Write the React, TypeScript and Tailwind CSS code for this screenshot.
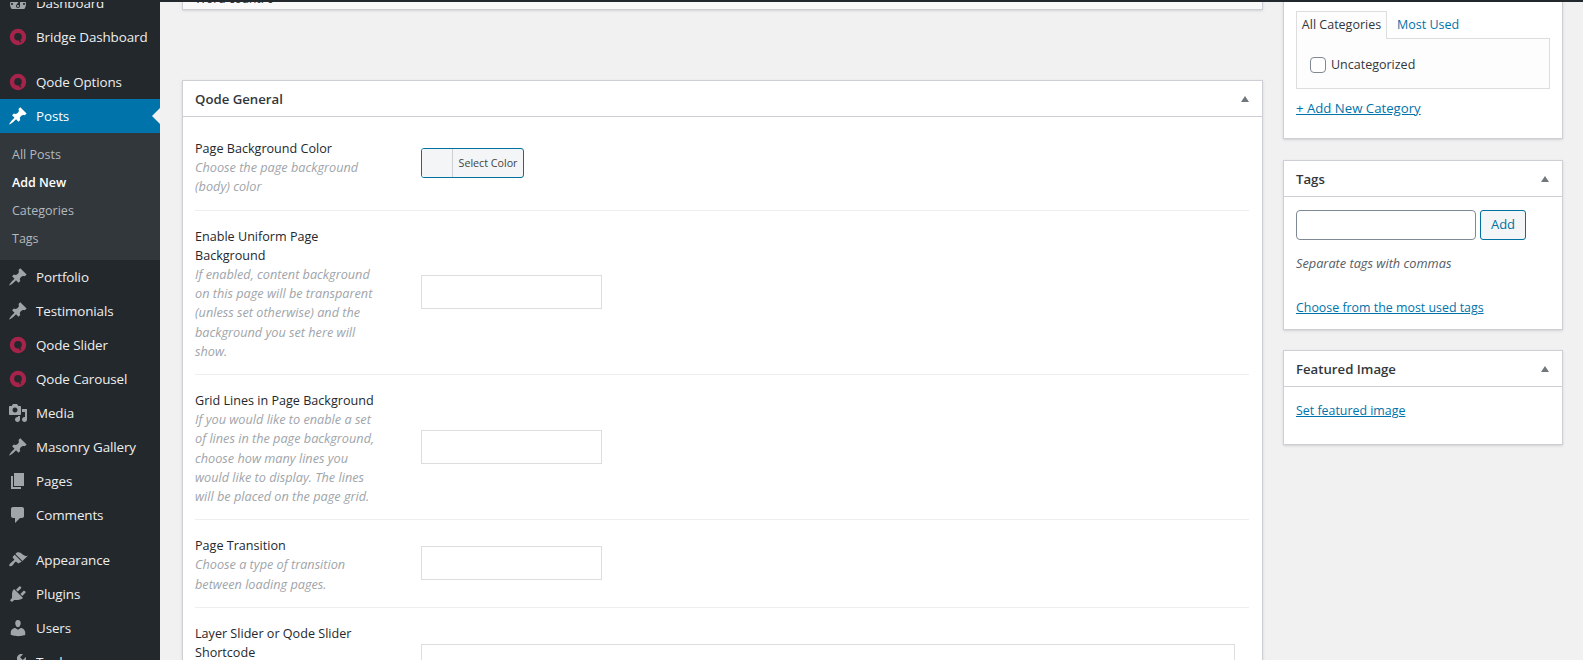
import React from 'react';

const font = { fontFamily: '"Open Sans", "Noto Sans", sans-serif' };

const paths: Record<string, string> = {
  dashboard: 'M3.76 16h12.48c1.1-1.37 1.76-3.11 1.76-5 0-4.42-3.58-8-8-8s-8 3.58-8 8c0 1.89.66 3.63 1.76 5zM10 4c.55 0 1 .45 1 1s-.45 1-1 1-1-.45-1-1 .45-1 1-1zM6 6c.55 0 1 .45 1 1s-.45 1-1 1-1-.45-1-1 .45-1 1-1zm8 0c.55 0 1 .45 1 1s-.45 1-1 1-1-.45-1-1 .45-1 1-1zm-5.37 5.55L12 7v6c0 1.1-.9 2-2 2s-2-.9-2-2c0-.57.24-1.08.63-1.45zM4 10c.55 0 1 .45 1 1s-.45 1-1 1-1-.45-1-1 .45-1 1-1zm12 0c.55 0 1 .45 1 1s-.45 1-1 1-1-.45-1-1 .45-1 1-1zm-5 3c0-.55-.45-1-1-1s-1 .45-1 1 .45 1 1 1 1-.45 1-1z',
  pin: 'M10.44 3.02l1.82-1.82 6.36 6.35-1.83 1.82c-1.05-.68-2.48-.57-3.41.36l-.75.75c-.92.93-1.04 2.35-.35 3.41l-1.83 1.82-2.41-2.41-2.8 2.79c-.42.42-3.38 2.71-3.8 2.29s1.86-3.39 2.28-3.81l2.79-2.79L4.1 9.36l1.83-1.82c1.05.69 2.48.57 3.4-.36l.75-.75c.93-.92 1.05-2.35.36-3.41z',
  media: 'M13 11V4c0-.55-.45-1-1-1h-1.67L9 1H5L3.67 3H2c-.55 0-1 .45-1 1v7c0 .55.45 1 1 1h10c.55 0 1-.45 1-1zM7 4.5c1.38 0 2.5 1.12 2.5 2.5S8.38 9.5 7 9.5 4.5 8.38 4.5 7 5.62 4.5 7 4.5zM14 6h5v10.5c0 1.38-1.12 2.5-2.5 2.5S14 17.88 14 16.5s1.12-2.5 2.5-2.5c.17 0 .34.02.5.05V9h-3V6zm-4 8.05V13h2v3.5c0 1.38-1.12 2.5-2.5 2.5S7 17.88 7 16.5 8.12 14 9.5 14c.17 0 .34.02.5.05z',
  pages: 'M6 15V2h10v13H6zm-1 1h8v2H3V5h2v11z',
  comments: 'M5 2h9c1.1 0 2 .9 2 2v7c0 1.1-.9 2-2 2h-2l-5 5v-5H5c-1.1 0-2-.9-2-2V4c0-1.1.9-2 2-2z',
  appearance: 'M14.48 11.06L7.41 3.99l1.5-1.5c.5-.56 2.3-.47 3.51.32 1.21.8 1.43 1.28 2.91 2.1 1.18.64 2.45 1.26 4.45.85zm-.71.71L6.7 4.7 4.93 6.47c-.39.39-.39 1.02 0 1.41l1.06 1.06c.39.39.39 1.03 0 1.42-.6.6-1.43 1.11-2.21 1.69-.35.26-.7.53-1.01.84C1.43 13.71.96 15.12 1.5 15.9c.56.84 2.07.41 3.12-.64.31-.31.58-.66.84-1.01.58-.78 1.09-1.61 1.69-2.21.39-.39 1.03-.39 1.42 0l1.06 1.06c.39.39 1.02.39 1.41 0z',
  plugins: 'M13.11 4.36L9.87 7.6 8 5.73l3.24-3.24c.35-.34 1.05-.2 1.56.32.52.51.66 1.21.31 1.55zm-8 1.77l.91-1.12 9.01 9.01-1.19.84c-.71.71-2.63 1.16-3.82 1.16H6.14L4.9 17.26c-.59.59-1.54.59-2.12 0-.59-.58-.59-1.53 0-2.12l1.24-1.24v-3.88c0-1.13.4-3.19 1.09-3.89zm7.26 3.97l3.24-3.24c.34-.35 1.04-.21 1.55.31.52.51.66 1.21.31 1.55l-3.24 3.25z',
  users: 'M10 9.25c-2.27 0-2.73-3.44-2.73-3.44C7 4.02 7.82 2 9.97 2c2.16 0 2.98 2.02 2.71 3.81 0 0-.41 3.44-2.68 3.44zm0 2.57L12.72 10c2.39 0 4.52 2.33 4.52 4.53v2.49s-3.65 1.13-7.24 1.13c-3.65 0-7.24-1.13-7.24-1.13v-2.49c0-2.25 1.94-4.48 4.47-4.48z',
  tools: 'M16.68 9.77c-1.34 1.34-3.3 1.67-4.95.99l-5.41 6.52c-.99.99-2.59.99-3.58 0s-.99-2.59 0-3.57l6.52-5.42c-.68-1.65-.35-3.61.99-4.95 1.28-1.28 3.12-1.62 4.72-1.06l-2.89 2.89 2.82 2.82 2.86-2.87c.53 1.58.18 3.39-1.08 4.65zM3.81 16.21c.4.39 1.04.39 1.43 0 .4-.4.4-1.04 0-1.43-.39-.4-1.03-.4-1.43 0-.39.39-.39 1.03 0 1.43z',
};

function MenuIcon({ name, white }: { name: string; white?: boolean }) {
  if (name === 'qode') {
    return (
      <svg viewBox="0 0 20 20" className="w-5 h-5 shrink-0">
        <circle cx="10" cy="10" r="8.2" fill="#a6234a" />
        <circle cx="10" cy="9.8" r="3.8" fill="#23282d" />
        <path d="M11.6 11.5l1.6 3.6-1.3.5-1.3-3.6z" fill="#23282d" />
      </svg>
    );
  }
  return (
    <svg viewBox="0 0 20 20" className={white ? 'w-5 h-5 shrink-0 fill-white' : 'w-5 h-5 shrink-0 fill-[#a0a5aa]'}>
      <path d={paths[name]} />
    </svg>
  );
}

function MenuItem({ icon, label }: { icon: string; label: string }) {
  return (
    <div className="h-[34px] flex items-center pl-2 gap-2 text-[13.4px] tracking-[-0.1px] text-[#eeeeee]">
      <MenuIcon name={icon} />
      <span>{label}</span>
    </div>
  );
}

function Sidebar() {
  return (
    <div className="w-[160px] shrink-0 h-full bg-[#23282d] overflow-hidden">
      <div className="-mt-[14px]">
        <MenuItem icon="dashboard" label="Dashboard" />
        <MenuItem icon="qode" label="Bridge Dashboard" />
        <div className="h-[11px]" />
        <MenuItem icon="qode" label="Qode Options" />
        <div className="relative h-[34px] flex items-center pl-2 gap-2 text-[13.4px] tracking-[-0.1px] text-white bg-[#0073aa]">
          <MenuIcon name="pin" white />
          <span>Posts</span>
          <div className="absolute right-0 top-[9px] border-y-[8px] border-y-transparent border-r-[8px] border-r-[#f1f1f1]" />
        </div>
        <div className="bg-[#32373c] pt-[8px] pb-[7px] text-[12.5px] text-[#b4b9be]">
          <div className="h-[28px] flex items-center pl-3">All Posts</div>
          <div className="h-[28px] flex items-center pl-3 text-white font-semibold">Add New</div>
          <div className="h-[28px] flex items-center pl-3">Categories</div>
          <div className="h-[28px] flex items-center pl-3">Tags</div>
        </div>
        <MenuItem icon="pin" label="Portfolio" />
        <MenuItem icon="pin" label="Testimonials" />
        <MenuItem icon="qode" label="Qode Slider" />
        <MenuItem icon="qode" label="Qode Carousel" />
        <MenuItem icon="media" label="Media" />
        <MenuItem icon="pin" label="Masonry Gallery" />
        <MenuItem icon="pages" label="Pages" />
        <MenuItem icon="comments" label="Comments" />
        <div className="h-[11px]" />
        <MenuItem icon="appearance" label="Appearance" />
        <MenuItem icon="plugins" label="Plugins" />
        <MenuItem icon="users" label="Users" />
        <MenuItem icon="tools" label="Tools" />
      </div>
    </div>
  );
}

function Caret() {
  return <div className="w-0 h-0 border-x-[4px] border-x-transparent border-b-[6px] border-b-[#72777c]" />;
}

function PanelHeader({ title }: { title: string }) {
  return (
    <div className="h-[36px] flex items-center justify-between border-b border-[#ccd0d4] pl-3 pr-[13px] text-[13.2px] font-semibold text-[#32373c]">
      <span className="mt-[2px]">{title}</span>
      <Caret />
    </div>
  );
}

function Row({ title, desc, first, children }: { title: string[]; desc: string[]; first?: boolean; children: React.ReactNode }) {
  return (
    <div className={first ? 'flex items-center pt-[1px] pb-[13px] border-b border-[#eeeeee]' : 'flex items-center pt-[16px] pb-[13px] border-b border-[#eeeeee]'}>
      <div className="w-[226px] shrink-0 leading-[19.2px]">
        {title.map(t => <div key={t} className="text-[12.6px] text-[#23282d]">{t}</div>)}
        {desc.map(t => <div key={t} className="text-[12.7px] italic text-[#a0a5aa]">{t}</div>)}
      </div>
      {children}
    </div>
  );
}

function EmptyBox() {
  return <div className="w-[181px] h-[34px] mb-1 border border-[#dddddd] bg-white" />;
}

function MainColumn() {
  return (
    <div className="w-[1081px] ml-[22px] shrink-0">
      <div className="h-[10px] -mt-[2px] bg-[#f9f9f9] border border-[#ccd0d4] border-t-0 shadow-sm overflow-hidden text-[12px] leading-[8px] text-[#32373c] pl-3 flex items-start">
        <span className="-mt-[5px]">Word count: 0</span>
      </div>
      <div className="mt-[70px] bg-white border border-[#ccd0d4] shadow-sm">
        <PanelHeader title="Qode General" />
        <div className="pl-3 pr-[13px] pt-[21px]">
          <Row first title={['Page Background Color']} desc={['Choose the page background', '(body) color']}>
            <div className="mb-[10px] w-[103px] h-[30px] flex border border-[#0071a1] rounded-[3px] bg-[#f3f5f6] overflow-hidden">
              <div className="w-[31px] border-r border-[#ccd0d4] bg-[#f3f5f6]" />
              <div className="flex-1 flex items-center justify-center text-[10.7px] text-[#444444]">Select Color</div>
            </div>
          </Row>
          <Row
            title={['Enable Uniform Page', 'Background']}
            desc={['If enabled, content background', 'on this page will be transparent', '(unless set otherwise) and the', 'background you set here will', 'show.']}
          >
            <EmptyBox />
          </Row>
          <Row
            title={['Grid Lines in Page Background']}
            desc={['If you would like to enable a set', 'of lines in the page background,', 'choose how many lines you', 'would like to display. The lines', 'will be placed on the page grid.']}
          >
            <EmptyBox />
          </Row>
          <Row title={['Page Transition']} desc={['Choose a type of transition', 'between loading pages.']}>
            <EmptyBox />
          </Row>
          <div className="flex items-start pt-[16px]">
            <div className="w-[226px] shrink-0 text-[12.6px] leading-[19.2px] text-[#23282d]">
              <div>Layer Slider or Qode Slider</div>
              <div>Shortcode</div>
            </div>
            <div className="flex-1 h-[34px] mt-[20px] mr-[14px] border border-[#dddddd] bg-white" />
          </div>
        </div>
      </div>
    </div>
  );
}

function SideColumn() {
  return (
    <div className="w-[280px] ml-[20px] shrink-0 text-[13px]">
      <div className="h-[139px] -mt-[2px] pt-[11px] px-3 bg-white border border-[#ccd0d4] border-t-0 shadow-sm">
        <div className="flex text-[12.5px] h-[28px]">
          <div className="h-[28px] w-[91px] flex items-center justify-center border border-[#dddddd] border-b-0 bg-[#fdfdfd] text-[#32373c] relative z-10">All Categories</div>
          <div className="h-[28px] px-[10px] flex items-center text-[#0073aa]">Most Used</div>
        </div>
        <div className="-mt-px h-[51px] w-[254px] border border-[#dddddd] bg-[#fdfdfd] flex items-center pl-[13px] gap-[5px] text-[12.5px] text-[#32373c]">
          <div className="w-4 h-4 mt-[2px] border border-[#7e8993] rounded-[4px] bg-white" />
          <span className="mt-[4px]">Uncategorized</span>
        </div>
        <div className="mt-[9px] text-[#0073aa] underline text-[13.2px] leading-[20px]">+ Add New Category</div>
      </div>
      <div className="mt-[21px] h-[170px] bg-white border border-[#ccd0d4] shadow-sm">
        <PanelHeader title="Tags" />
        <div className="px-3 pt-[13px]">
          <div className="flex gap-1">
            <div className="w-[180px] h-[30px] border border-[#7e8993] rounded-[4px] bg-white" />
            <div className="w-[46px] h-[30px] border border-[#0071a1] rounded-[3px] bg-[#f3f5f6] text-[#0071a1] flex items-center justify-center">Add</div>
          </div>
          <div className="mt-[13px] italic text-[12.75px] leading-[20px] text-[#555d66]">Separate tags with commas</div>
          <div className="mt-[25px] text-[12.4px] leading-[20px] text-[#0073aa] underline">Choose from the most used tags</div>
        </div>
      </div>
      <div className="mt-[20px] h-[95px] bg-white border border-[#ccd0d4] shadow-sm">
        <PanelHeader title="Featured Image" />
        <div className="px-3 pt-[14px] text-[12.4px] leading-[20px] text-[#0073aa] underline">Set featured image</div>
      </div>
    </div>
  );
}

export default function App() {
  return (
    <div className="h-[660px] flex overflow-hidden bg-[#f1f1f1] relative" style={font}>
      <Sidebar />
      <div className="flex flex-1 items-start pt-[2px]">
        <MainColumn />
        <SideColumn />
      </div>
      <div className="absolute top-0 left-0 right-0 h-[2px] bg-[#23282d]" />
    </div>
  );
}
